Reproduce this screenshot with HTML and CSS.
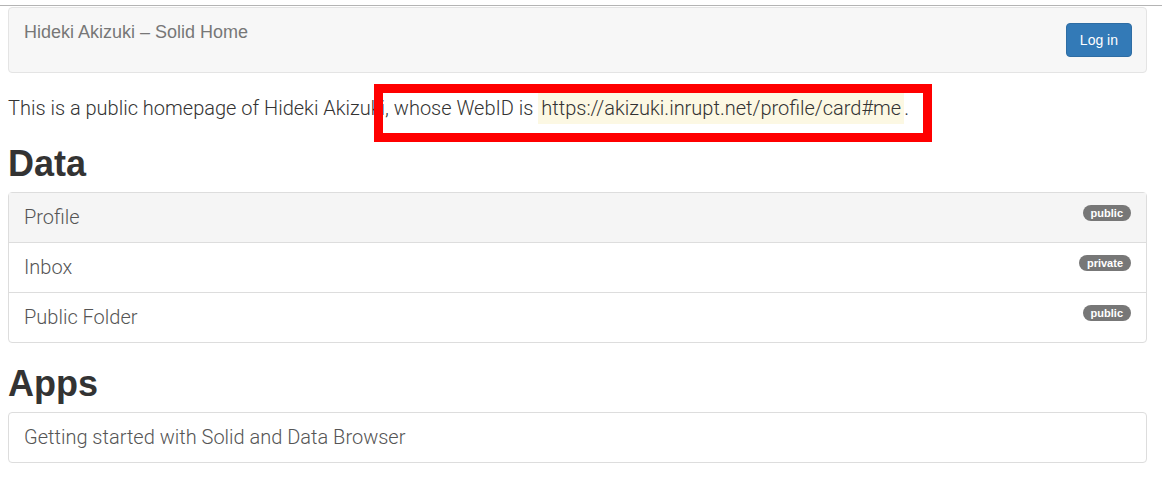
FILE: index.html
```html
<!DOCTYPE html>
<html lang="en">
<head>
    <meta charset="UTF-8">
    <meta name="viewport" content="width=device-width, initial-scale=1.0">
    <title>Hideki Akizuki – Solid Home</title>
    <link rel="stylesheet" href="styles.css">
</head>
<body>
    <div class="topline"></div>
    <div class="page">
        <nav class="navbar">
            <span class="brand">Hideki Akizuki – Solid Home</span>
            <button class="btn-login">Log in</button>
        </nav>

        <p class="intro">
            This is a public homepage of Hideki Akizuki, whose WebID is
            <mark>https://akizuki.inrupt.net/profile/card#me</mark>.
        </p>

        <h1>Data</h1>
        <div class="list-group">
            <a class="list-item active">Profile <span class="badge">public</span></a>
            <a class="list-item">Inbox <span class="badge">private</span></a>
            <a class="list-item">Public Folder <span class="badge">public</span></a>
        </div>

        <h1>Apps</h1>
        <div class="list-group">
            <a class="list-item">Getting started with Solid and Data Browser</a>
        </div>

        <div class="highlight"></div>
    </div>
</body>
</html>
```

FILE: styles.css
```css
body {
    margin: 0;
    background-color: #fff;
    color: #333;
    font-family: "Liberation Sans", Arial, sans-serif;
    font-size: 18px;
}

.topline {
    margin-top: 5px;
    height: 1px;
    background-color: #b4b4b4;
}

.page {
    position: relative;
    padding: 0 15px 0 8px;
}

.navbar {
    display: flex;
    justify-content: space-between;
    align-items: flex-start;
    margin-top: 1px;
    height: 64px;
    padding: 0 14px 0 15px;
    background-color: #f7f7f7;
    border: 1px solid #e4e4e4;
    border-radius: 4px;
}

.brand {
    margin-top: 14px;
    font-size: 18px;
    color: #777;
}

.btn-login {
    margin-top: 15px;
    height: 34px;
    padding: 0 13px;
    background-color: #337ab7;
    border: 1px solid #2e6da4;
    border-radius: 4px;
    color: #fff;
    font-family: "Liberation Sans", Arial, sans-serif;
    font-size: 14px;
}

.intro {
    margin: 18px 0 0;
    line-height: 34px;
    font-family: Roboto, "Liberation Sans", sans-serif;
    font-size: 20px;
    font-weight: 300;
    color: #333;
}

mark {
    background-color: #fcf8e3;
    color: #333;
    padding: 4px 3px;
}

h1 {
    margin: 18px 0 7px;
    font-size: 36px;
    line-height: 42px;
    font-weight: bold;
    color: #333;
}

.list-group {
    border: 1px solid #ddd;
    border-radius: 4px;
    margin-bottom: 20px;
}

.list-item {
    display: flex;
    justify-content: space-between;
    align-items: flex-start;
    height: 49px;
    padding: 0 15px;
    line-height: 49px;
    font-family: Roboto, "Liberation Sans", sans-serif;
    font-size: 20px;
    font-weight: 300;
    color: #555;
    border-top: 1px solid #ddd;
}

.list-item:first-child {
    border-top: none;
}

.active {
    background-color: #f5f5f5;
}

.badge {
    margin-top: 12px;
    padding: 0 8px;
    height: 16px;
    line-height: 16px;
    border-radius: 9px;
    background-color: #777;
    color: #fff;
    font-family: "Liberation Sans", Arial, sans-serif;
    font-size: 11px;
    font-weight: bold;
}

.highlight {
    position: absolute;
    left: 374px;
    top: 77px;
    width: 540px;
    height: 40px;
    border: 9px solid #ff0000;
}
```
